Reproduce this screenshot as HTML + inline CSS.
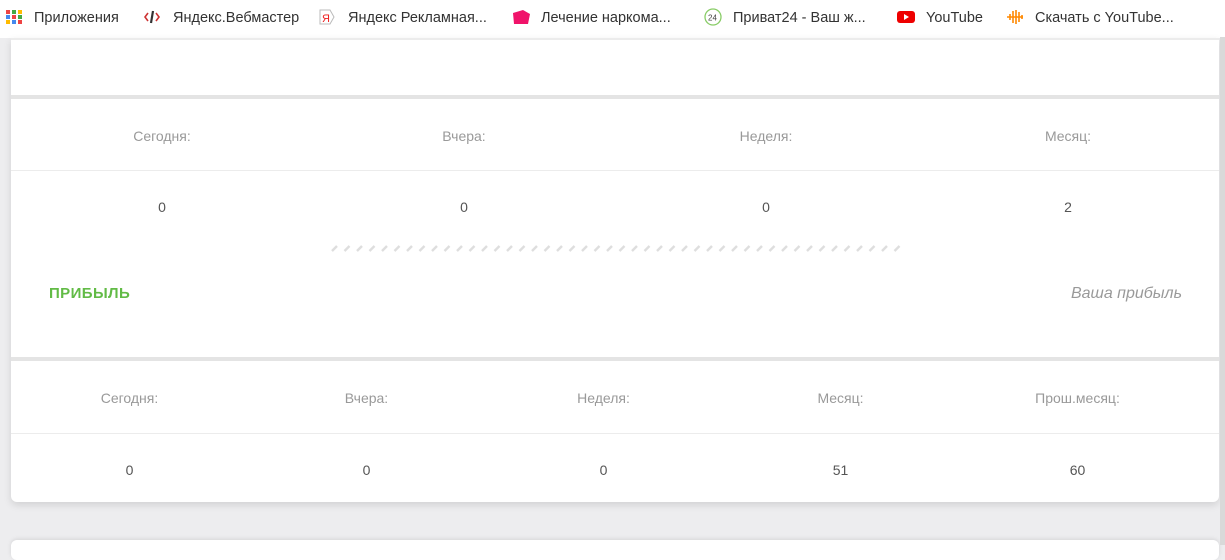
<!DOCTYPE html>
<html><head><meta charset="utf-8"><style>
*{margin:0;padding:0;box-sizing:border-box}
body{width:1225px;height:545px;overflow:hidden;background:#ededef;font-family:"Liberation Sans",sans-serif;position:relative}
.bar{position:absolute;left:0;top:0;width:1225px;height:38px;background:#fff;font-size:14.5px;color:#333}
.bm{position:absolute;top:9px;white-space:nowrap;line-height:18px}
.ic{position:absolute;top:9px;width:16px;height:16px}
.card{position:absolute;left:11px;top:38px;width:1208px;height:464px;background:#fff;border-radius:0 0 6px 6px;box-shadow:0 3px 8px rgba(0,0,0,.12);border-top:2px solid #ececec}
.sb{position:absolute;right:0;top:37px;width:5px;height:508px;background:#d9d9d9}
.band{position:absolute;left:0;width:1208px;height:4px;background:#e4e4e4}
.line{position:absolute;left:0;width:1208px;height:1px;background:#ececec}
.row{position:absolute;left:0;display:flex;font-size:14px;text-align:center}
.row div{flex:1}
.h{color:#999}.v{color:#555}
.card2{position:absolute;left:11px;top:540px;width:1208px;height:20px;background:#fff;border-radius:6px;box-shadow:0 -1px 4px rgba(0,0,0,.1)}
</style></head><body>
<div class="bar">
<svg class="ic" style="left:6px" viewBox="0 0 16 16"><g><rect x="0" y="1" width="4" height="4" fill="#e44"/><rect x="6" y="1" width="4" height="4" fill="#4a4"/><rect x="12" y="1" width="4" height="4" fill="#fb0"/><rect x="0" y="6" width="4" height="4" fill="#48e"/><rect x="6" y="6" width="4" height="4" fill="#e44"/><rect x="12" y="6" width="4" height="4" fill="#4a4"/><rect x="0" y="11" width="4" height="4" fill="#fb0"/><rect x="6" y="11" width="4" height="4" fill="#48e"/><rect x="12" y="11" width="4" height="4" fill="#e44"/></g></svg>
<span class="bm" style="left:34px">Приложения</span>
<svg class="ic" style="left:144px" viewBox="0 0 16 16"><path d="M4 4L1 8l3 4M12 4l3 4-3 4" stroke="#c33" stroke-width="1.6" fill="none"/><path d="M9 2L7 14" stroke="#333" stroke-width="2.2"/></svg>
<span class="bm" style="left:173px">Яндекс.Вебмастер</span>
<svg class="ic" style="left:319px" viewBox="0 0 16 16"><path d="M1 1h10l4 7-4 7H1z" fill="#fff" stroke="#bbb"/><text x="3" y="13" font-size="11" fill="#e22" font-family="Liberation Sans">Я</text></svg>
<span class="bm" style="left:348px">Яндекс Рекламная...</span>
<svg class="ic" style="left:511px;width:20px" viewBox="0 0 20 16"><path d="M2 4L12 1l7 4-2 10H3z" fill="#f0136a"/></svg>
<span class="bm" style="left:541px">Лечение наркома...</span>
<svg class="ic" style="left:704px;width:18px;height:18px;top:8px" viewBox="0 0 18 18"><circle cx="9" cy="9" r="8" fill="#fff" stroke="#8c6" stroke-width="1.3"/><text x="4" y="12.5" font-size="8" fill="#444" font-family="Liberation Sans">24</text></svg>
<span class="bm" style="left:733px">Приват24 - Ваш ж...</span>
<svg class="ic" style="left:897px;width:18px" viewBox="0 0 18 16"><rect x="0" y="2" width="18" height="12" rx="3" fill="#e00"/><path d="M7 5l5 3-5 3z" fill="#fff"/></svg>
<span class="bm" style="left:926px">YouTube</span>
<svg class="ic" style="left:1005px;width:20px" viewBox="0 0 20 16"><path d="M2 8h16M5 5v6M8 2v12M11 1v14M14 3v10M17 6v4" stroke="#f80" stroke-width="1.6"/></svg>
<span class="bm" style="left:1035px">Скачать с YouTube...</span>
</div>
<div class="card">
<div class="band" style="top:55px"></div>
<div class="row" style="top:88px;width:1208px"><div class="h">Сегодня:</div><div class="h">Вчера:</div><div class="h">Неделя:</div><div class="h">Месяц:</div></div>
<div class="line" style="top:130px"></div>
<div class="row" style="top:159px;width:1208px"><div class="v">0</div><div class="v">0</div><div class="v">0</div><div class="v">2</div></div>
<svg style="position:absolute;left:320px;top:203px" width="572" height="10"><defs><pattern id="p" width="12.5" height="10" patternUnits="userSpaceOnUse"><path d="M1 8L6 3" stroke="#dedede" stroke-width="2.4"/></pattern></defs><rect width="572" height="10" fill="url(#p)"/></svg>
<div style="position:absolute;left:38px;top:245px;font-size:15px;font-weight:bold;color:#62bb46;letter-spacing:.4px">ПРИБЫЛЬ</div>
<div style="position:absolute;right:37px;top:245px;font-size:16px;font-style:italic;color:#999">Ваша прибыль</div>
<div class="band" style="top:317px"></div>
<div class="row" style="top:350px;width:1185px"><div class="h">Сегодня:</div><div class="h">Вчера:</div><div class="h">Неделя:</div><div class="h">Месяц:</div><div class="h">Прош.месяц:</div></div>
<div class="line" style="top:393px"></div>
<div class="row" style="top:422px;width:1185px"><div class="v">0</div><div class="v">0</div><div class="v">0</div><div class="v">51</div><div class="v">60</div></div>
</div>
<div class="card2"></div>
<div class="sb"></div>
</body></html>
